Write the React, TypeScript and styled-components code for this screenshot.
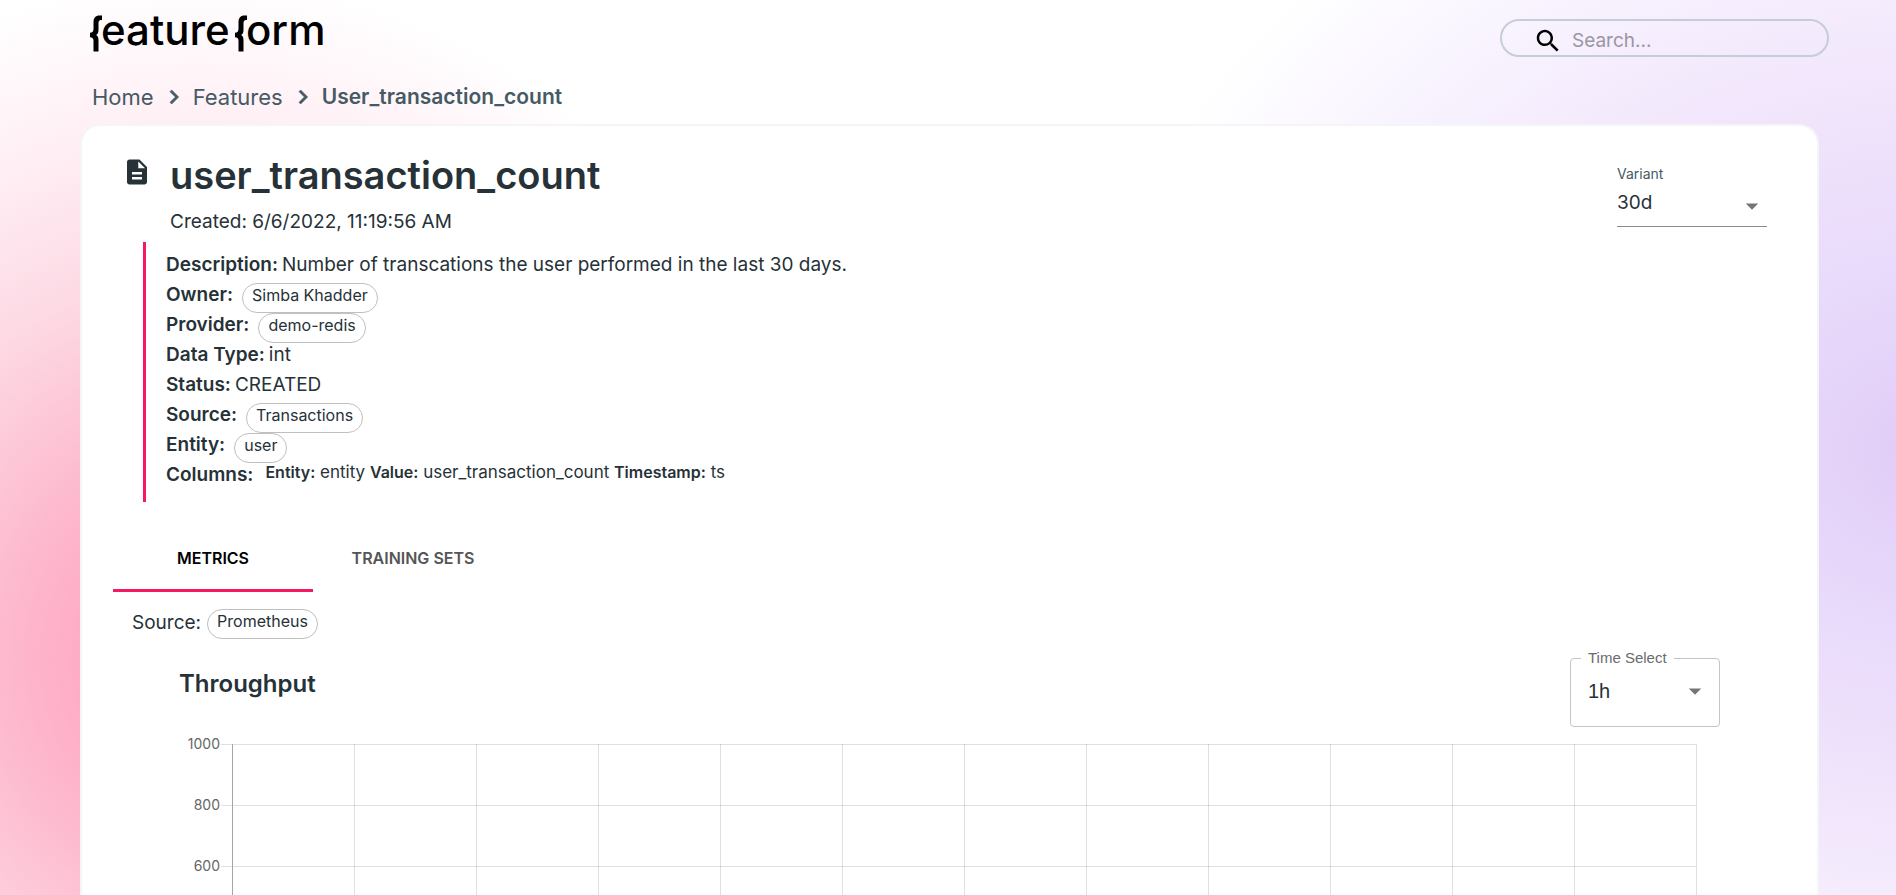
import React from "react";
import styled, { createGlobalStyle, css } from "styled-components";

const ink = "#263238";
const slate = "#455a64";
const accent = "#f5195f";
const arial = `"Liberation Sans", Arial, sans-serif`;

const GlobalStyle = createGlobalStyle`
  *, *::before, *::after { box-sizing: border-box; }
  body {
    margin: 0;
    font-family: Inter, "Liberation Sans", sans-serif;
    font-size: 19px;
    line-height: 30px;
    color: ${ink};
    background: #fff;
  }
  h1, h2, p, ol, dl, dd { margin: 0; padding: 0; }
`;

const Page = styled.div`
  display: flex;
  flex-direction: column;
  min-height: 100vh;
  background:
    radial-gradient(ellipse 630px 680px at 200px 660px, #ffa6c2 0%, #ffabc6 18%, #fdbace 32%, #fdd9e4 56%, #fff0f5 80%, rgba(255, 255, 255, 0) 100%),
    radial-gradient(ellipse 860px 690px at calc(100% + 44px) 450px, #dfc9f7 0%, #e3d0f8 8%, #e8dafb 25%, #efe2fb 46%, #f5ecfd 66%, #faf7ff 85%, rgba(255, 255, 255, 0) 100%),
    #fff;
`;

const Header = styled.header`
  display: flex;
  justify-content: space-between;
  align-items: flex-start;
  height: 76px;
  padding: 3px 67px 0 88px;
`;

const LogoLink = styled.a`
  display: block;
  color: #000;
`;

const LogoText = styled.text`
  font-size: 42px;
  font-weight: 500;
  fill: currentColor;
`;

const SearchBox = styled.label`
  display: flex;
  align-items: center;
  gap: 9px;
  width: 329px;
  height: 38px;
  margin-top: 16px;
  padding: 5px 20px 0 31px;
  border: 2px solid #c5cdd5;
  border-radius: 20px;
  color: #000;
`;

const SearchInput = styled.input`
  flex: 1;
  min-width: 0;
  padding: 0;
  border: 0;
  outline: 0;
  background: transparent;
  font: inherit;
  color: ${ink};
  &::placeholder { color: #9b96a3; opacity: 1; }
`;

const Crumbs = styled.ol`
  display: flex;
  align-items: center;
  gap: 5px;
  height: 48px;
  padding: 0 92px 6px;
  list-style: none;
  font-size: 22px;
  color: ${slate};
`;

const Crumb = styled.li`
  display: flex;
  align-items: center;
  gap: 6px;
`;

const CrumbLink = styled.a<{ $current?: boolean }>`
  color: inherit;
  text-decoration: none;
  ${(p) => p.$current && css`font-size: 21px; font-weight: 600;`}
`;

const Card = styled.main`
  flex: 1;
  display: flex;
  flex-direction: column;
  margin: 0 77px 0 80px;
  padding: 0 50px 0 31px;
  background: #fff;
  border: 2px solid #f4f5f7;
  border-bottom: 0;
  border-radius: 20px 20px 0 0;
`;

const TitleRow = styled.div`
  display: flex;
  align-items: flex-start;
  padding: 24px 0 0 9px;
`;

const FileIcon = styled.svg`
  flex: none;
  margin: 7px 18px 0 0;
`;

const TitleBlock = styled.div`
  flex: 1;
`;

const Title = styled.h1`
  font-size: 38px;
  line-height: 50px;
  font-weight: 600;
`;

const Created = styled.p`
  padding-top: 7px;
`;

const VariantField = styled.div`
  display: flex;
  flex-direction: column;
  width: 150px;
  margin-top: 14px;
`;

const VariantLabel = styled.label`
  font-size: 14px;
  line-height: 20px;
  color: ${slate};
`;

const SelectWrap = styled.div`
  display: grid;
  align-items: center;
  > * { grid-area: 1 / 1; }
  > svg { justify-self: end; pointer-events: none; }
`;

const selectBase = css`
  appearance: none;
  width: 100%;
  margin: 0;
  border: 0;
  outline: 0;
  background: transparent;
  color: ${ink};
`;

const VariantSelect = styled.select`
  ${selectBase}
  height: 43px;
  padding: 0 0 4px;
  border-bottom: 1px solid #8c8c8c;
  font: inherit;
`;

const Details = styled.dl`
  margin: 5px 0 0 30px;
  padding: 8px 0 12px 20px;
  border-left: 3px solid ${accent};
`;

const DetailRow = styled.div`
  display: flex;
  align-items: flex-start;
  height: 30px;
`;

const DetailName = styled.dt`
  font-weight: 600;
`;

const DetailValue = styled.dd<{ $kind: Kind }>`
  padding-left: ${(p) => ({ text: 4, chip: 9, columns: 12 })[p.$kind]}px;
  ${(p) => p.$kind === "columns" && css`
    font-size: 17px;
    line-height: 24px;
    b { font-size: 16px; font-weight: 600; }
  `}
`;

const Chip = styled.button`
  height: 30px;
  margin: 2px 0 0;
  padding: 0 9px 6px;
  border: 1px solid #c0c0c0;
  border-radius: 15px;
  background: transparent;
  font: inherit;
  font-size: 16px;
  line-height: 22px;
  color: ${ink};
`;

const TabList = styled.div`
  display: flex;
  margin-top: 26px;
`;

const Tab = styled.button<{ $active?: boolean }>`
  width: 200px;
  height: 64px;
  padding: 0 0 2px;
  border: 0;
  border-bottom: 3px solid ${(p) => (p.$active ? accent : "transparent")};
  background: transparent;
  font: inherit;
  font-size: 16px;
  font-weight: 600;
  color: ${(p) => (p.$active ? "#000" : "#555")};
`;

const SourceRow = styled.div`
  display: flex;
  align-items: flex-start;
  gap: 6px;
  padding: 16px 0 0 19px;
  ${Chip} { margin-top: 1px; }
`;

const ChartHead = styled.div`
  display: flex;
  justify-content: space-between;
  align-items: flex-start;
  height: 104px;
  padding: 9px 47px 0 66px;
`;

const ChartTitle = styled.h2`
  padding-top: 21px;
  font-size: 24px;
  font-weight: 600;
`;

const TimeField = styled.fieldset`
  width: 150px;
  height: 79px;
  margin: 0;
  padding: 0 9px 0 17px;
  border: 1px solid #c4c4c4;
  border-radius: 4px;
`;

const TimeLegend = styled.legend`
  margin-left: -7px;
  padding: 0 7px;
  font-family: ${arial};
  font-size: 15px;
  line-height: 20px;
  color: #6b6b6b;
`;

const TimeSelect = styled.select`
  ${selectBase}
  height: 46px;
  padding: 0;
  font-family: ${arial};
  font-size: 20px;
`;

const Chart = styled.div`
  flex: 1;
  display: flex;
  gap: 12px;
  min-height: 150px;
  padding: 0 71px 0 67px;
`;

const AxisLabels = styled.div`
  width: 40px;
  margin-top: -14px;
  text-align: right;
  font-size: 14px;
  color: #666;
`;

const AxisLabel = styled.div`
  height: 61px;
`;

const Plot = styled.svg`
  flex: 1;
  align-self: stretch;
  min-width: 0;
  overflow: visible;
  shape-rendering: crispEdges;
`;

type Kind = "text" | "chip" | "columns";

const details: { name: string; value: React.ReactNode; kind: Kind }[] = [
  { name: "Description:", value: "Number of transcations the user performed in the last 30 days.", kind: "text" },
  { name: "Owner:", value: "Simba Khadder", kind: "chip" },
  { name: "Provider:", value: "demo-redis", kind: "chip" },
  { name: "Data Type:", value: "int", kind: "text" },
  { name: "Status:", value: "CREATED", kind: "text" },
  { name: "Source:", value: "Transactions", kind: "chip" },
  { name: "Entity:", value: "user", kind: "chip" },
  {
    name: "Columns:",
    value: (
      <>
        <b>Entity:</b> entity <b>Value:</b> user_transaction_count <b>Timestamp:</b> ts
      </>
    ),
    kind: "columns",
  },
];

const yTicks = [1000, 800, 600];
const tickGap = 61;
const columnCount = 12;

const Arrow = () => (
  <svg width="30" height="30" viewBox="0 0 24 24" fill="#757575" aria-hidden="true">
    <path d="M7 10l5 5 5-5z" />
  </svg>
);

const LogoMark = ({ x }: { x: number }) => (
  <path
    transform={`translate(${x} 0)`}
    fill="currentColor"
    d="M12 12.500H9.500C5.500 12.500 3.500 15 3.500 19V25.500C3.500 28.500 2.500 29.700 0 29.700V34.300C2.500 34.300 3.500 35.500 3.500 38V48.500H8.500V37.500C8.500 34.800 8 33 6.200 32C8 31 8.500 29.200 8.500 26.500V20C8.500 18 9.500 17 11 17H12Z"
  />
);

const Logo = () => (
  <svg width="240" height="54" viewBox="0 0 240 54" role="img" aria-label="featureform">
    <LogoMark x={2} />
    <LogoText x="13" y="42">eature</LogoText>
    <LogoMark x={147} />
    <LogoText x="158" y="42">orm</LogoText>
  </svg>
);

const Chevron = () => (
  <svg width="28" height="28" viewBox="0 0 24 24" fill="currentColor" aria-hidden="true">
    <path d="M10 6L8.590 7.410 13.170 12l-4.580 4.590L10 18l6-6z" stroke="currentColor" strokeWidth="0.500" />
  </svg>
);

export default function App() {
  return (
    <Page>
      <GlobalStyle />
      <Header>
        <LogoLink href="#home"><Logo /></LogoLink>
        <SearchBox>
          <svg width="30" height="30" viewBox="0 0 24 24" fill="currentColor" aria-hidden="true">
            <path d="M15.500 14h-.79l-.28-.27C15.410 12.590 16 11.110 16 9.500 16 5.910 13.090 3 9.500 3S3 5.910 3 9.500 5.910 16 9.500 16c1.610 0 3.090-.59 4.230-1.570l.27.28v.79l5 4.990L20.490 19l-4.990-5zm-6 0C7.010 14 5 11.990 5 9.500S7.010 5 9.500 5 14 7.010 14 9.500 11.990 14 9.500 14z" />
          </svg>
          <SearchInput type="search" aria-label="Search" placeholder="Search..." />
        </SearchBox>
      </Header>
      <nav aria-label="Breadcrumb">
        <Crumbs>
          <Crumb><CrumbLink href="#home">Home</CrumbLink><Chevron /></Crumb>
          <Crumb><CrumbLink href="#features">Features</CrumbLink><Chevron /></Crumb>
          <Crumb><CrumbLink $current href="#user" aria-current="page">User_transaction_count</CrumbLink></Crumb>
        </Crumbs>
      </nav>
      <Card>
        <TitleRow>
          <FileIcon width="30" height="30" viewBox="0 0 24 24" fill={ink} aria-hidden="true">
            <path d="M14 2H6c-1.100 0-1.990.9-1.990 2L4 20c0 1.100.89 2 1.990 2H18c1.100 0 2-.9 2-2V8l-6-6zm2 16H8v-2h8v2zm0-4H8v-2h8v2zm-3-5V3.500L18.500 9H13z" />
          </FileIcon>
          <TitleBlock>
            <Title>user_transaction_count</Title>
            <Created>Created: 6/6/2022, 11:19:56 AM</Created>
          </TitleBlock>
          <VariantField>
            <VariantLabel htmlFor="variant">Variant</VariantLabel>
            <SelectWrap>
              <VariantSelect id="variant"><option>30d</option></VariantSelect>
              <Arrow />
            </SelectWrap>
          </VariantField>
        </TitleRow>
        <Details>
          {details.map((d) => (
            <DetailRow key={d.name}>
              <DetailName>{d.name}</DetailName>
              <DetailValue $kind={d.kind}>
                {d.kind === "chip" ? <Chip type="button">{d.value}</Chip> : d.value}
              </DetailValue>
            </DetailRow>
          ))}
        </Details>
        <TabList role="tablist">
          <Tab $active role="tab" aria-selected="true">METRICS</Tab>
          <Tab role="tab" aria-selected="false">TRAINING SETS</Tab>
        </TabList>
        <SourceRow>
          <span>Source:</span>
          <Chip type="button">Prometheus</Chip>
        </SourceRow>
        <ChartHead>
          <ChartTitle>Throughput</ChartTitle>
          <TimeField>
            <TimeLegend>Time Select</TimeLegend>
            <SelectWrap>
              <TimeSelect aria-label="Time Select"><option>1h</option></TimeSelect>
              <Arrow />
            </SelectWrap>
          </TimeField>
        </ChartHead>
        <Chart>
          <AxisLabels>
            {yTicks.map((t) => <AxisLabel key={t}>{t}</AxisLabel>)}
          </AxisLabels>
          <Plot aria-hidden="true">
            <g stroke="#000" strokeOpacity="0.12">
              {yTicks.map((t, i) => (
                <line key={t} x1="-11" x2="100%" y1={i * tickGap + 1} y2={i * tickGap + 1} />
              ))}
              {Array.from({ length: columnCount }, (_, i) => {
                const x = `${((i + 1) * 100) / columnCount}%`;
                return <line key={x} x1={x} x2={x} y1="1" y2="100%" />;
              })}
            </g>
            <line x1="0" x2="0" y1="1" y2="100%" stroke="#a5a5a5" />
          </Plot>
        </Chart>
      </Card>
    </Page>
  );
}
